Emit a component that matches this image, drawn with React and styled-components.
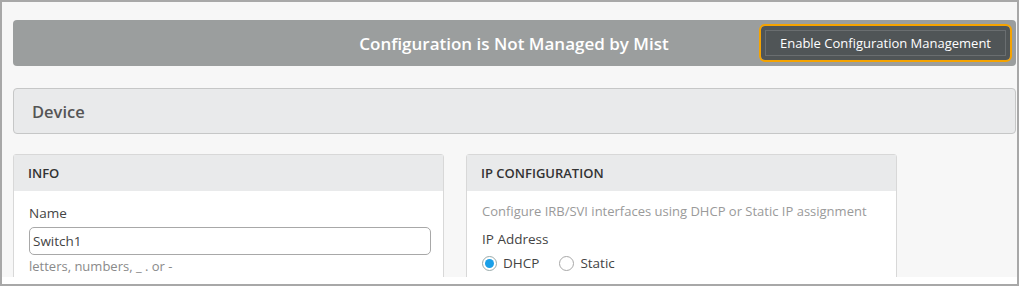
import React from "react";
import styled, { createGlobalStyle } from "styled-components";

const Global = createGlobalStyle`
  html, body { margin: 0; padding: 0; background: #fff; }
  body { font-family: "Open Sans", "Noto Sans", sans-serif; }
  * { box-sizing: border-box; }
`;

const Frame = styled.div`
  width: 1019px;
  height: 286px;
  border: 2px solid #a8a8a8;
  background: #fff;
  overflow: hidden;
`;

const Page = styled.div`
  height: 275px;
  background: #f7f7f7;
  padding: 18px 1px 0 11px;
  overflow: hidden;
  display: flex;
  flex-direction: column;
  & > * { flex-shrink: 0; }
`;

const Banner = styled.div`
  height: 46px;
  background: #9b9e9e;
  border-radius: 4px;
  display: flex;
  align-items: center;
  padding-right: 6px;
`;

const BannerTitle = styled.div`
  flex: 1;
  text-align: center;
  color: #fff;
  font-weight: 600;
  font-size: 17px;
  padding-left: 254px;
`;

const EnableButton = styled.button`
  height: 34px;
  padding: 0 14px;
  width: 249px;
  background: #505557;
  color: #fff;
  border: 4px solid #505557;
  outline: 2.5px solid #f5a300;
  outline-offset: 0;
  border-radius: 4px;
  font-family: inherit;
  font-size: 13px;
  display: flex;
  align-items: center;
  justify-content: center;
  box-shadow: inset 0 0 0 1px #6a6e70;
`;

const SectionBar = styled.div`
  margin-top: 22px;
  height: 46px;
  background: #e9eaeb;
  border: 1px solid #c6c7c7;
  border-radius: 4px;
  display: flex;
  align-items: center;
  padding-left: 18px;
  font-size: 16.5px;
  font-weight: 600;
  color: #555;
`;

const Columns = styled.div`
  margin-top: 20px;
  display: flex;
  gap: 22px;
`;

const Card = styled.div`
  width: 431px;
  background: #fff;
  border: 1px solid #d8d8d8;
  border-radius: 3px 3px 0 0;
  height: 140px;
`;

const CardHeader = styled.div`
  height: 36px;
  background: #e9eaeb;
  display: flex;
  align-items: center;
  padding-left: 14px;
  font-size: 13px;
  font-weight: 600;
  color: #333;
`;

const CardBody = styled.div`
  padding: ${(p) => p.$top || 12}px 14px 0 15px;
  display: flex;
  flex-direction: column;
`;

const Label = styled.div`
  font-size: 13.5px;
  color: #444;
  line-height: 18px;
  margin-bottom: ${(p) => p.$gap || 0}px;
`;

const Description = styled.div`
  font-size: 13px;
  color: #9a9a9a;
  line-height: 18px;
  margin-bottom: 10px;
`;

const TextInput = styled.input`
  width: 402px;
  height: 28px;
  border: 1px solid #a8a8a8;
  border-radius: 5px;
  padding: 0 3px;
  font-family: inherit;
  font-size: 13.5px;
  color: #444;
  background: #fff;
`;

const Hint = styled.div`
  font-size: 13px;
  color: #8a8a8a;
  margin-top: 2px;
  line-height: 18px;
`;

const RadioRow = styled.div`
  display: flex;
  gap: 20px;
  margin-top: 6px;
`;

const RadioLabel = styled.label`
  display: flex;
  align-items: center;
  gap: 6px;
  font-size: 13.5px;
  color: #444;
`;

const RadioDot = styled.span`
  width: 15px;
  height: 15px;
  border-radius: 50%;
  border: 1px solid ${(p) => (p.$checked ? "#9aa" : "#a8a8a8")};
  background: #fff;
  display: inline-flex;
  align-items: center;
  justify-content: center;
  &::after {
    content: "";
    width: 9px;
    height: 9px;
    border-radius: 50%;
    background: ${(p) => (p.$checked ? "#1a9fe8" : "transparent")};
  }
`;

export default function App() {
  return (
    <>
      <Global />
      <Frame>
        <Page>
          <Banner>
            <BannerTitle>Configuration is Not Managed by Mist</BannerTitle>
            <EnableButton>Enable Configuration Management</EnableButton>
          </Banner>
          <SectionBar>Device</SectionBar>
          <Columns>
            <Card>
              <CardHeader>INFO</CardHeader>
              <CardBody $top={13}>
                <Label $gap={5}>Name</Label>
                <TextInput defaultValue="Switch1" />
                <Hint>letters, numbers, _ . or -</Hint>
              </CardBody>
            </Card>
            <Card>
              <CardHeader>IP CONFIGURATION</CardHeader>
              <CardBody $top={11}>
                <Description>Configure IRB/SVI interfaces using DHCP or Static IP assignment</Description>
                <Label>IP Address</Label>
                <RadioRow>
                  <RadioLabel><RadioDot $checked />DHCP</RadioLabel>
                  <RadioLabel><RadioDot />Static</RadioLabel>
                </RadioRow>
              </CardBody>
            </Card>
          </Columns>
        </Page>
      </Frame>
    </>
  );
}
